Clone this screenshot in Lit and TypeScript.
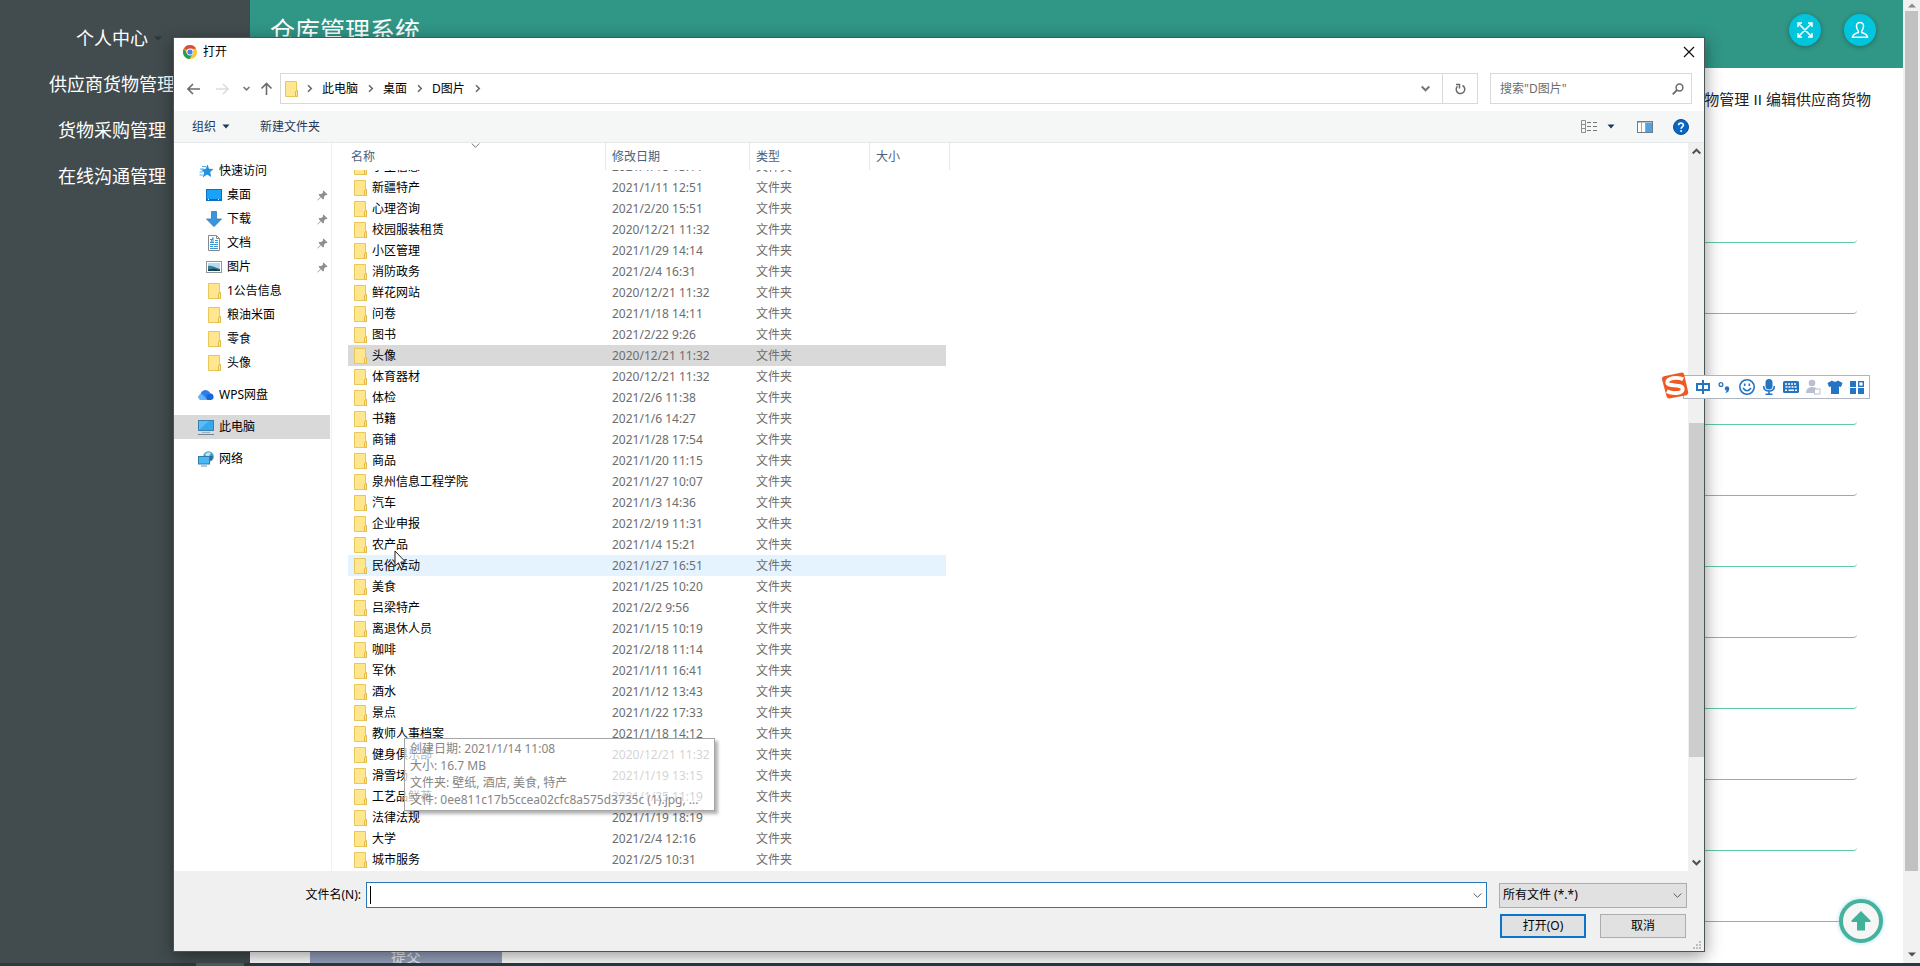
import { LitElement, html, svg, css } from "lit";
import { customElement } from "lit/decorators.js";
import { classMap } from "lit/directives/class-map.js";

type Entry = { name: string; date: string; state?: "selected" | "hovered" };

const entries: Entry[] = [
  { name: "学生信息", date: "2021/1/18 13:11" },
  { name: "新疆特产", date: "2021/1/11 12:51" },
  { name: "心理咨询", date: "2021/2/20 15:51" },
  { name: "校园服装租赁", date: "2020/12/21 11:32" },
  { name: "小区管理", date: "2021/1/29 14:14" },
  { name: "消防政务", date: "2021/2/4 16:31" },
  { name: "鲜花网站", date: "2020/12/21 11:32" },
  { name: "问卷", date: "2021/1/18 14:11" },
  { name: "图书", date: "2021/2/22 9:26" },
  { name: "头像", date: "2020/12/21 11:32", state: "selected" },
  { name: "体育器材", date: "2020/12/21 11:32" },
  { name: "体检", date: "2021/2/6 11:38" },
  { name: "书籍", date: "2021/1/6 14:27" },
  { name: "商铺", date: "2021/1/28 17:54" },
  { name: "商品", date: "2021/1/20 11:15" },
  { name: "泉州信息工程学院", date: "2021/1/27 10:07" },
  { name: "汽车", date: "2021/1/3 14:36" },
  { name: "企业申报", date: "2021/2/19 11:31" },
  { name: "农产品", date: "2021/1/4 15:21" },
  { name: "民俗活动", date: "2021/1/27 16:51", state: "hovered" },
  { name: "美食", date: "2021/1/25 10:20" },
  { name: "吕梁特产", date: "2021/2/2 9:56" },
  { name: "离退休人员", date: "2021/1/15 10:19" },
  { name: "咖啡", date: "2021/2/18 11:14" },
  { name: "军休", date: "2021/1/11 16:41" },
  { name: "酒水", date: "2021/1/12 13:43" },
  { name: "景点", date: "2021/1/22 17:33" },
  { name: "教师人事档案", date: "2021/1/18 14:12" },
  { name: "健身俱乐部", date: "2020/12/21 11:32" },
  { name: "滑雪场", date: "2021/1/19 13:15" },
  { name: "工艺品鲜花", date: "2021/1/25 11:19" },
  { name: "法律法规", date: "2021/1/19 18:19" },
  { name: "大学", date: "2021/2/4 12:16" },
  { name: "城市服务", date: "2021/2/5 10:31" },
];

const folder = html`<svg width="13" height="16" viewBox="0 0 13 16">
  <path d="M0.5 0.5H11.5V9.5H12.5V15.5H0.5Z" fill="#ffe68f" stroke="#e9c65a" />
  <path d="M10.5 15V10.5L12.5 9.5V15.5Z" fill="#ffe9a0" stroke="#e3b94a" />
</svg>`;

const pin = html`<svg width="11" height="11" viewBox="0 0 11 11">
  <path d="M6.500 0.500L10.500 4.500L9.500 5.200L8.600 5L7 6.800L7 8.800L6 9.500L4 7.300L0.800 10.500L0.300 10.200L3.400 6.700L1.500 4.800L2.300 4L4.300 4.100L6.100 2.500L5.800 1.300Z" fill="#8a9096" />
</svg>`;

const star = html`<svg width="16" height="16" viewBox="0 0 16 16">
  <path d="M9.500 1.500L11 5.800L15.500 6L12.200 9L13.200 14L9 11.500L4.800 14.500L6.200 9.400L3.200 6.500L7.600 6Z" fill="#2590dc" />
  <path d="M4 3.500H8M2 6H6M1.500 9H5M1.500 12H5" stroke="#4fb0ee" fill="none" />
</svg>`;

const desktop = html`<svg width="16" height="16" viewBox="0 0 16 16">
  <rect x="0.500" y="2.500" width="15" height="11" fill="#18a2fa" stroke="#0c72bd" />
  <path d="M1 12.500H15" stroke="#0a65aa" /><path d="M2 12.500H4M12 12.500H14" stroke="#fff" stroke-dasharray="1 1" />
</svg>`;

const download = html`<svg width="16" height="16" viewBox="0 0 16 16">
  <path d="M5.500 0.500H10.500V8H15.500L8 15.700L0.500 8H5.500Z" fill="#3a94dd" stroke="#2e7fc4" stroke-width="0.800" />
</svg>`;

const documentIcon = html`<svg width="16" height="16" viewBox="0 0 16 16">
  <path d="M2.500 0.500H10.500L13.500 3.500V15.500H2.500Z" fill="#fff" stroke="#85898c" />
  <path d="M10.500 0.500V3.500H13.500" fill="none" stroke="#85898c" />
  <path d="M4 4.500H7M4 7.500H8M9 5.500H12M9 7.500H12M4 9.500H12M4 11.500H7M8 11.500H12M4 13.500H12" stroke="#3f95cf" />
  <path d="M4.500 8L7 2.500V8" fill="none" stroke="#3f95cf" />
</svg>`;

const pictures = html`<svg width="16" height="16" viewBox="0 0 16 16">
  <rect x="0.500" y="2.500" width="15" height="11" fill="#fff" stroke="#8f9599" />
  <rect x="2" y="4" width="12" height="8" fill="#b4daf5" />
  <path d="M2 7C5 6 8 8 14 10V12H2Z" fill="#3a7d9a" /><path d="M2 10.500L8 9.500L14 11V12H2Z" fill="#1d4250" />
</svg>`;

const cloud = html`<svg width="16" height="16" viewBox="0 0 16 16">
  <path d="M3 13A3 3 0 0 1 2.500 7.200A5 5 0 0 1 11 4.500A5 5 0 0 1 12 5.500L7 13Z" fill="#2b7de9" />
  <path d="M7 13L9.500 7.500A3.500 3.500 0 0 1 15.600 9.500A3.200 3.200 0 0 1 13 13Z" fill="#1668d8" />
  <path d="M3 13A2.900 2.900 0 1 1 5.500 8.300L9.500 13Z" fill="#63b4f8" />
</svg>`;

const computer = html`<svg width="16" height="16" viewBox="0 0 16 16">
  <rect x="0.500" y="1.500" width="15" height="10" fill="#56bdf8" stroke="#3a7fae" />
  <path d="M1 11L11 2H15V11Z" fill="#38a8ee" /><path d="M4 13.500H12" stroke="#9fb0bd" /><path d="M0 15.500H16" stroke="#6f8797" />
</svg>`;

const network = html`<svg width="16" height="16" viewBox="0 0 16 16">
  <circle cx="10.500" cy="5.500" r="5.300" fill="#4f9dc4" /><path d="M7 3Q10 0 13 2L11 5L8 5Z" fill="#bfe4ef" />
  <path d="M12 5L15 5L14 9L12 9Z" fill="#2c6f95" />
  <rect x="0.500" y="5.500" width="11" height="7.500" fill="#4bb7f5" stroke="#2e7dab" /><path d="M3 15H9" stroke="#5b95b5" />
</svg>`;

const chevron = (d: string, size = 9, color = "#666", sw = 1.5) => html`<svg width=${size} height=${size} viewBox="0 0 9 9">
  <path d=${d} fill="none" stroke=${color} stroke-width=${sw} />
</svg>`;
const RIGHT = "M3 1.200L6.300 4.500L3 7.800";
const DOWN = "M0.700 2.500L4.500 6.300L8.300 2.500";
const UP = "M0.700 6.500L4.500 2.700L8.300 6.500";

const caret = html`<svg width="8" height="5" viewBox="0 0 8 5"><path d="M0.500 0.500H7.500L4 4.500Z" fill="#1e395b" /></svg>`;

@customElement("warehouse-page")
export class WarehousePage extends LitElement {
  static styles = css`
    :host {
      display: grid;
      grid-template-columns: 250px minmax(0, 1fr) 17px;
      grid-template-rows: minmax(0, 1fr) 3px;
      height: 100%;
      background: #fff;
    }
    .side {
      background: #424c4e;
      padding-top: 15px;
      display: flex;
      flex-direction: column;
    }
    .side a {
      display: flex;
      justify-content: center;
      align-items: center;
      height: 46px;
      padding-right: 26px;
      color: #fff;
      font-size: 18px;
      line-height: 24px;
      text-decoration: none;
      white-space: nowrap;
      position: relative;
    }
    .side svg {
      position: absolute;
      left: 154px;
    }
    main {
      overflow: hidden;
      display: flex;
      flex-direction: column;
    }
    header {
      flex: none;
      box-sizing: border-box;
      height: 68px;
      background: #309686;
      display: flex;
      align-items: flex-start;
      justify-content: space-between;
      padding: 14px 27px 0 20px;
    }
    h1 {
      margin: 0;
      font-size: 25px;
      font-weight: 400;
      line-height: 32px;
      color: #fff;
    }
    .actions {
      display: flex;
      gap: 23px;
    }
    .actions button {
      width: 32px;
      height: 32px;
      padding: 0;
      border: 0;
      border-radius: 50%;
      background: #00c5dc;
      box-shadow: 0 1px 5px rgba(0, 0, 0, 0.3);
      display: grid;
      place-items: center;
    }
    .crumbs {
      flex: none;
      padding: 20px 32px 0 0;
      text-align: right;
      font-family: "Liberation Sans", "Noto Sans CJK SC", sans-serif;
      font-size: 15px;
      line-height: 24px;
      color: #222;
    }
    form {
      padding: 60px 46px 0 60px;
      display: flex;
      flex-direction: column;
    }
    .field {
      flex: none;
      box-sizing: border-box;
      height: 71px;
      padding-top: 24px;
    }
    .field.spaced {
      margin-top: 40px;
    }
    .field input {
      box-sizing: border-box;
      width: 100%;
      height: 47px;
      border: 0;
      border-bottom: 1px solid #5fcba6;
      border-radius: 0 0 4px 0;
      background: none;
      outline: 0;
    }
    .submit {
      flex: none;
      align-self: flex-start;
      margin-top: 14px;
      width: 192px;
      height: 38px;
      border: 0;
      background: #96a3be;
      color: #f0f3f8;
      font: inherit;
      font-size: 15px;
    }
    .scroll {
      background: #f1f1f1;
      display: flex;
      flex-direction: column;
      align-items: center;
    }
    .scroll .thumb {
      width: 13px;
      flex: 865;
      background: #c1c1c1;
    }
    .scroll .rest {
      flex: 87;
      box-sizing: border-box;
      display: flex;
      flex-direction: column;
      justify-content: flex-end;
      padding-bottom: 6px;
    }
    .scroll .up {
      height: 11px;
      display: grid;
      place-items: center;
    }
    .task {
      grid-column: 1 / -1;
      background: linear-gradient(90deg, #2c3b43, #26384a);
      padding-left: 196px;
    }
    .task i {
      display: block;
      width: 48px;
      height: 3px;
      background: #4d5d68;
    }
  `;

  render() {
    const menu = ["个人中心", "供应商货物管理", "货物采购管理", "在线沟通管理"];
    return html`
      <nav class="side">
        ${menu.map(
          (m, i) => html`<a href="#">${m}${i === 0
            ? html`<svg width="8" height="5" viewBox="0 0 8 5"><path d="M0 0.500H8L4 4.500Z" fill="#2d3638" /></svg>`
            : ""}</a>`
        )}
      </nav>
      <main>
        <header>
          <h1>仓库管理系统</h1>
          <div class="actions">
            <button aria-label="全屏">
              <svg width="16" height="16" viewBox="0 0 16 16" fill="none" stroke="#fff" stroke-width="1.500">
                <path d="M1 5V1H5M11 1H15V5M15 11V15H11M5 15H1V11M1.500 1.500L14.500 14.500M14.500 1.500L1.500 14.500" />
              </svg>
            </button>
            <button aria-label="用户">
              <svg width="18" height="18" viewBox="0 0 18 18" fill="none" stroke="#fff" stroke-width="1.500">
                <path d="M9 1.500C6.500 1.500 5.300 3.200 5.500 5.500C5.700 8 6.500 9 7.300 10V11.500C5 12.500 1.500 13 1.500 16.300H16.500C16.500 13 13 12.500 10.700 11.500V10C11.500 9 12.300 8 12.500 5.500C12.700 3.200 11.500 1.500 9 1.500Z" />
              </svg>
            </button>
          </div>
        </header>
        <div class="crumbs">供应商货物管理 II 编辑供应商货物</div>
        <form>
          ${Array.from(
            { length: 10 },
            (_, i) => html`<div class=${classMap({ field: true, spaced: i === 2 })}>
              <input type="text" aria-label="货物信息 ${i + 1}" />
            </div>`
          )}
          <button class="submit" type="button">提交</button>
        </form>
      </main>
      <div class="scroll">
        <div class="up"><svg width="8" height="5" viewBox="0 0 8 5"><path d="M0 4.500H8L4 0.500Z" fill="#8a8a8a" /></svg></div>
        <div class="thumb"></div>
        <div class="rest"><svg width="8" height="5" viewBox="0 0 8 5"><path d="M0 0.500H8L4 4.500Z" fill="#505050" /></svg></div>
      </div>
      <div class="task"><i></i></div>
    `;
  }
}

@customElement("file-dialog")
export class FileDialog extends LitElement {
  static styles = css`
    :host {
      display: flex;
      flex-direction: column;
      box-sizing: border-box;
      border: 1px solid #4b5557;
      background: #fff;
      box-shadow: 0 4px 16px rgba(0, 0, 0, 0.42);
      font-size: 12px;
      line-height: 16px;
      color: #000;
    }
    svg {
      flex: none;
      display: block;
    }
    button,
    input,
    select {
      font: inherit;
      color: inherit;
      box-sizing: border-box;
    }
    .plain {
      border: 0;
      padding: 0;
      background: none;
      display: flex;
      align-items: center;
    }
    .title {
      height: 28px;
      flex: none;
      display: flex;
      align-items: center;
      gap: 6px;
      padding: 0 9px;
    }
    .title .plain {
      margin-left: auto;
    }
    .nav {
      height: 45px;
      flex: none;
      display: flex;
      align-items: center;
      padding: 0 12px 0 13px;
    }
    .history {
      display: flex;
      align-items: center;
      width: 93px;
      gap: 16px;
    }
    .history .recent {
      margin: 0 -6px 0 -2px;
    }
    .address {
      flex: 1;
      box-sizing: border-box;
      height: 31px;
      border: 1px solid #d9d9d9;
      display: flex;
      align-items: stretch;
    }
    .path {
      flex: 1;
      display: flex;
      align-items: center;
      padding: 0 12px 0 4px;
    }
    .path > :last-child {
      margin-left: auto;
    }
    .path .lead {
      margin: 0 8px 0 7px;
    }
    .path .step {
      margin: 0 8px;
    }
    .path a {
      color: #000;
      text-decoration: none;
    }
    .refresh {
      width: 35px;
      border: 0;
      border-left: 1px solid #d9d9d9;
      background: none;
      padding: 0;
      display: grid;
      place-items: center;
    }
    .search {
      box-sizing: border-box;
      width: 202px;
      height: 31px;
      margin-left: 12px;
      border: 1px solid #d9d9d9;
      display: flex;
      align-items: center;
      padding: 0 7px 0 9px;
    }
    .search input {
      flex: 1;
      min-width: 0;
      border: 0;
      padding: 0;
      outline: 0;
      background: none;
    }
    .search input::placeholder {
      color: #6d6d6d;
      opacity: 1;
    }
    .tools {
      flex: none;
      height: 32px;
      box-sizing: border-box;
      background: #f5f7f7;
      border-bottom: 1px solid #e5e8ea;
      display: flex;
      align-items: center;
      padding: 0 15px 0 18px;
      color: #1e395b;
    }
    .tools .organise {
      gap: 6px;
      margin-right: 30px;
    }
    .tools .views {
      margin: 0 22px 0 auto;
      gap: 9px;
    }
    .tools .preview {
      margin-right: 20px;
    }
    .body {
      flex: 1;
      min-height: 0;
      display: grid;
      grid-template-columns: 158px minmax(0, 1fr) 16px;
    }
    .places {
      border-right: 1px solid #f0f0f0;
      padding: 16px 1px 0 0;
      overflow: hidden;
    }
    .places a {
      display: flex;
      align-items: center;
      height: 24px;
      gap: 5px;
      padding-left: 24px;
      color: #000;
      text-decoration: none;
    }
    .places .sub {
      padding: 0 2px 0 32px;
    }
    .places .glyph {
      width: 16px;
      display: grid;
      place-items: center;
    }
    .places .sub .pin {
      margin-left: auto;
    }
    .places .group {
      margin-top: 8px;
    }
    .places .current {
      background: #d9d9d9;
    }
    table {
      display: flex;
      flex-direction: column;
      min-height: 0;
      overflow: hidden;
      padding-left: 16px;
      position: relative;
    }
    thead {
      display: block;
      flex: none;
      position: relative;
    }
    tbody {
      display: flex;
      flex: 1;
      min-height: 0;
      flex-direction: column;
      justify-content: flex-end;
      overflow: hidden;
      padding-bottom: 1px;
    }
    tr {
      display: grid;
      grid-template-columns: 258px 144px 120px 80px;
      width: 602px;
      flex: none;
    }
    tbody tr {
      width: 598px;
      height: 21px;
      grid-template-columns: 258px 144px 120px 76px;
    }
    th {
      box-sizing: border-box;
      height: 27px;
      padding: 6px 0 0 6px;
      border-right: 1px solid #e3e6ea;
      text-align: left;
      font-weight: 400;
      color: #4c607a;
    }
    th:first-child {
      padding-left: 3px;
    }
    .sort {
      position: absolute;
      left: 123px;
      top: -2px;
    }
    td {
      display: flex;
      align-items: center;
      padding: 0 0 0 6px;
      gap: 5px;
      color: #6d6d6d;
      white-space: nowrap;
    }
    td:first-child {
      color: #000;
    }
    .selected {
      background: #d9d9d9;
    }
    .hovered {
      background: #e5f3ff;
    }
    .scroll {
      background: #f0f0f0;
      display: flex;
      flex-direction: column;
      align-items: center;
    }
    .scroll .before {
      flex: 279;
      box-sizing: border-box;
      padding-top: 4px;
    }
    .scroll .thumb {
      flex: 338;
      width: 15px;
      background: #cdcdcd;
    }
    .scroll .after {
      flex: 111;
      display: flex;
      flex-direction: column;
      justify-content: flex-end;
      padding-bottom: 4px;
      box-sizing: border-box;
    }
    footer {
      flex: none;
      background: #f0f0f0;
      display: grid;
      grid-template-columns: 187px minmax(0, 1fr) 188px;
      row-gap: 6px;
      padding: 11px 17px 13px 0;
      position: relative;
    }
    footer label {
      text-align: right;
      line-height: 26px;
    }
    .name {
      margin: 0 12px 0 5px;
      display: flex;
      align-items: center;
      border: 1px solid #2a78b8;
      background: #fff;
      height: 24px;
      padding: 0 4px 0 3px;
    }
    .name input {
      flex: 1;
      min-width: 0;
      border: 0;
      outline: 0;
      padding: 0;
      height: 18px;
      border-left: 1px solid #000;
      background: none;
    }
    .kind {
      display: grid;
      align-items: center;
    }
    .kind select {
      grid-area: 1 / 1;
      appearance: none;
      width: 100%;
      height: 25px;
      border: 1px solid #adadad;
      border-radius: 0;
      background: #e1e1e1;
      padding: 0 3px;
    }
    .kind svg {
      grid-area: 1 / 1;
      justify-self: end;
      margin-right: 5px;
      pointer-events: none;
    }
    .buttons {
      grid-column: 3;
      display: flex;
      justify-content: space-between;
      padding: 0 1px;
    }
    .buttons button {
      width: 86px;
      height: 24px;
      padding: 0;
      border: 1px solid #adadad;
      background: #e1e1e1;
    }
    .buttons .primary {
      border: 2px solid #0b75cc;
    }
    .grip {
      position: absolute;
      right: 3px;
      bottom: 2px;
    }
  `;

  private place(icon: unknown, label: string, cls: string, pinned = false) {
    return html`<a href="#" class=${cls}><span class="glyph">${icon}</span>${label}${pinned ? html`<span class="pin">${pin}</span>` : ""}</a>`;
  }

  render() {
    const dots = [[6, 0], [3, 3], [6, 3], [0, 6], [3, 6], [6, 6]];
    return html`
      <div class="title">
        <svg width="14" height="14" viewBox="0 0 14 14">
          <circle cx="7" cy="7" r="7" fill="#fbc62f" />
          <path d="M7 7L0.900 3.500A7 7 0 0 1 13.100 3.700H7Z" fill="#dd4b3c" />
          <path d="M0.900 3.500A7 7 0 0 0 6.500 14L10 8.500L7 7L4 8.500Z" fill="#1f9d5a" />
          <circle cx="7" cy="7" r="3.400" fill="#fff" /><circle cx="7" cy="7" r="2.600" fill="#4380ec" />
        </svg>
        <span>打开</span>
        <button class="plain" aria-label="关闭">
          <svg width="12" height="12" viewBox="0 0 12 12"><path d="M1 1L11 11M11 1L1 11" stroke="#111" stroke-width="1.200" /></svg>
        </button>
      </div>
      <div class="nav">
        <div class="history">
          <button class="plain" aria-label="后退">
            <svg width="13" height="12" viewBox="0 0 13 12"><path d="M6 1L1 6L6 11M1 6H13" fill="none" stroke="#6b6b6b" stroke-width="1.600" /></svg>
          </button>
          <button class="plain" aria-label="前进">
            <svg width="13" height="12" viewBox="0 0 13 12"><path d="M7 1L12 6L7 11M12 6H0" fill="none" stroke="#dcdcdc" stroke-width="1.600" /></svg>
          </button>
          <button class="plain recent" aria-label="最近位置">${chevron(DOWN, 7, "#777", 2)}</button>
          <button class="plain" aria-label="上移">
            <svg width="13" height="13" viewBox="0 0 13 13"><path d="M1.500 6.500L6.500 1.500L11.500 6.500M6.500 1.500V13" fill="none" stroke="#6b6b6b" stroke-width="1.600" /></svg>
          </button>
        </div>
        <div class="address">
          <div class="path">
            ${folder}
            <span class="lead">${chevron(RIGHT)}</span>
            <a href="#">此电脑</a><span class="step">${chevron(RIGHT)}</span>
            <a href="#">桌面</a><span class="step">${chevron(RIGHT)}</span>
            <a href="#">D图片</a><span class="step">${chevron(RIGHT)}</span>
            <button class="plain" aria-label="以前的位置">${chevron(DOWN, 9, "#777", 2)}</button>
          </div>
          <button class="refresh" aria-label="刷新">
            <svg width="11" height="12" viewBox="0 0 11 12" fill="none" stroke="#6b6b6b" stroke-width="1.500">
              <path d="M7.500 2.500A4.300 4.300 0 1 1 2.500 3.200M1 1.500H4.500V5.500" />
            </svg>
          </button>
        </div>
        <div class="search">
          <input type="text" aria-label="搜索" placeholder='搜索"D图片"' />
          <svg width="12" height="12" viewBox="0 0 12 12" fill="none" stroke="#6b6b6b" stroke-width="1.500">
            <circle cx="7.500" cy="4.500" r="3.400" /><path d="M5 7L0.700 11.300" stroke-width="1.800" />
          </svg>
        </div>
      </div>
      <div class="tools">
        <button class="plain organise">组织 ${caret}</button>
        <button class="plain">新建文件夹</button>
        <button class="plain views" aria-label="更改视图">
          <svg width="17" height="13" viewBox="0 0 17 13" fill="none" stroke="#8a8f94">
            <path d="M0.500 0.500H4.500V12.500H0.500ZM0.500 4.500H4.500M0.500 8.500H4.500" />
            <path d="M6 2.500H10M12 2.500H16M6 6.500H10M12 6.500H16M6 10.500H10M12 10.500H16" stroke="#777" />
          </svg>
          ${caret}
        </button>
        <button class="plain preview" aria-label="预览窗格">
          <svg width="16" height="12" viewBox="0 0 16 12">
            <rect x="0.500" y="0.500" width="15" height="11" fill="#fff" stroke="#6e7c89" />
            <rect x="9" y="2" width="6" height="9" fill="#4ba3e6" /><path d="M0 1H16" stroke="#6e7c89" /><path d="M4.500 2V11M8.500 2V11" stroke="#9aa" />
          </svg>
        </button>
        <button class="plain" aria-label="帮助">
          <svg width="16" height="16" viewBox="0 0 16 16">
            <circle cx="8" cy="8" r="7.500" fill="#0967c4" stroke="#0b4e94" />
            <path d="M5.600 6.300C5.600 3.400 10.400 3.400 10.400 6.100C10.400 7.900 8.100 7.900 8.100 9.700" fill="none" stroke="#fff" stroke-width="1.600" />
            <circle cx="8.100" cy="12" r="1" fill="#fff" />
          </svg>
        </button>
      </div>
      <div class="body">
        <nav class="places">
          ${this.place(star, "快速访问", "")}
          ${this.place(desktop, "桌面", "sub", true)}
          ${this.place(download, "下载", "sub", true)}
          ${this.place(documentIcon, "文档", "sub", true)}
          ${this.place(pictures, "图片", "sub", true)}
          ${["1公告信息", "粮油米面", "零食", "头像"].map((n) => this.place(folder, n, "sub"))}
          ${this.place(cloud, "WPS网盘", "group")}
          ${this.place(computer, "此电脑", "group current")}
          ${this.place(network, "网络", "group")}
        </nav>
        <table>
          <thead>
            <tr>
              <th>名称<span class="sort">${chevron(DOWN, 9, "#777", 1)}</span></th>
              <th>修改日期</th>
              <th>类型</th>
              <th>大小</th>
            </tr>
          </thead>
          <tbody>
            ${entries.map(
              (e) => html`<tr class=${e.state ?? ""}>
                <td>${folder}${e.name}</td>
                <td>${e.date}</td>
                <td>文件夹</td>
                <td></td>
              </tr>`
            )}
          </tbody>
        </table>
        <div class="scroll">
          <div class="before">${chevron(UP, 9, "#505050", 2)}</div>
          <div class="thumb"></div>
          <div class="after">${chevron(DOWN, 9, "#505050", 2)}</div>
        </div>
      </div>
      <footer>
        <label for="file">文件名(N):</label>
        <div class="name"><input id="file" type="text" />${chevron(DOWN, 9, "#555", 1)}</div>
        <div class="kind">
          <select aria-label="文件类型"><option>所有文件 (*.*)</option></select>
          ${chevron(DOWN, 9, "#555", 1)}
        </div>
        <div class="buttons">
          <button class="primary">打开(O)</button>
          <button>取消</button>
        </div>
        <svg class="grip" width="8" height="8" viewBox="0 0 8 8">
          ${dots.map(([x, y]) => svg`<rect x=${x} y=${y} width="2" height="2" fill="#bdbdbd" />`)}
        </svg>
      </footer>
    `;
  }
}

@customElement("input-bar")
export class InputBar extends LitElement {
  static styles = css`
    :host {
      display: flex;
      align-items: flex-end;
    }
    .logo {
      position: relative;
      z-index: 1;
      margin-right: -6px;
    }
    .strip {
      display: flex;
      align-items: center;
      gap: 4px;
      height: 22px;
      border: 1px solid #aeb4c0;
      background: #fff;
      padding: 0 3px 0 10px;
    }
    svg {
      display: block;
    }
  `;

  render() {
    const b = "#2474c4";
    return html`
      <svg class="logo" width="28" height="27" viewBox="0 0 28 28">
        <path d="M2.500 4.500L21 0.500Q23 0.300 23.500 2.500L27.700 21Q27.900 23 26 24L8 27.500Q6 27.700 5.300 25.500L0.500 7.500Q0.200 5 2.500 4.500Z" fill="#ee5a24" />
        <path d="M22.500 7.500C16 4.500 6 6.500 6 11C6 15.500 22 12 22 17.500C22 22.500 12 23 5.500 20" fill="none" stroke="#fff" stroke-width="4" />
      </svg>
      <div class="strip">
        <svg width="18" height="18" viewBox="0 0 18 18" fill="none" stroke=${b} stroke-width="2"><path d="M3 6H15V12H3ZM9 2V16" /></svg>
        <svg width="18" height="18" viewBox="0 0 18 18"><circle cx="5" cy="6.500" r="1.900" fill="none" stroke=${b} stroke-width="1.300" /><circle cx="11" cy="10.500" r="2.200" fill=${b} /><path d="M13.200 10.500Q13.200 14 10 15L9.500 14Q11.500 13 11.500 11Z" fill=${b} /></svg>
        <svg width="18" height="18" viewBox="0 0 18 18" fill="none" stroke=${b} stroke-width="1.600"><circle cx="9" cy="9" r="7.200" /><path d="M5 10Q9 15.500 13 10M6.700 5.500V8M11.300 5.500V8" /></svg>
        <svg width="18" height="18" viewBox="0 0 18 18" fill="none" stroke=${b} stroke-width="1.600"><rect x="6.300" y="1.800" width="5.400" height="9" rx="2.700" fill=${b} /><path d="M3.700 8Q3.700 13 9 13Q14.300 13 14.300 8M9 13V16M5.500 16.200H12.500" /></svg>
        <svg width="18" height="18" viewBox="0 0 18 18"><rect x="1" y="3" width="16" height="12" rx="1.500" fill=${b} /><path d="M3 6H15M3.500 9H15" stroke="#fff" stroke-width="1.600" stroke-dasharray="2 1" /><path d="M3 12.200H5M6.500 12.200H12M13 12.200H15" stroke="#fff" stroke-width="1.600" /></svg>
        <svg width="18" height="18" viewBox="0 0 18 18" fill="#b8bfd0"><circle cx="8" cy="5" r="3.300" /><path d="M2 15Q2 9 8 9Q12 9 13 11H10V15Z" /><rect x="10.500" y="11" width="5.500" height="5" fill="#fff" stroke="#b8bfd0" /></svg>
        <svg width="18" height="18" viewBox="0 0 18 18"><path d="M6 2.500Q9 5 12 2.500L16.500 5L15 9L13 8.500V16H5V8.500L3 9L1.500 5Z" fill=${b} /></svg>
        <svg width="18" height="18" viewBox="0 0 18 18" fill=${b}><path d="M2 3H8V9H2ZM2 10H8V16H2ZM10 10H16V16H10Z" /><rect x="10.700" y="3.700" width="4.600" height="4.600" fill="none" stroke=${b} stroke-width="1.400" /></svg>
      </div>
    `;
  }
}

@customElement("app-root")
export class AppRoot extends LitElement {
  static styles = css`
    :host {
      display: block;
      position: relative;
      height: 100vh;
      overflow: hidden;
      font-family: "Noto Sans", "Noto Sans CJK SC", sans-serif;
    }
    .window {
      position: absolute;
      inset: 37px 215px 14px 173px;
    }
    .ime {
      position: absolute;
      top: 372px;
      right: 50px;
    }
    .top {
      position: absolute;
      right: 37px;
      bottom: 23px;
      box-sizing: border-box;
      width: 44px;
      height: 44px;
      border: 4px solid #46b29d;
      border-radius: 50%;
      background: #f6f6f6;
      box-shadow: 0 0 4px #9adcf0;
      padding: 0;
      display: grid;
      place-items: center;
    }
    .tip {
      position: absolute;
      left: 404px;
      top: 738px;
      box-sizing: border-box;
      width: 311px;
      padding: 1px 5px 2px;
      border: 1px solid #a5a5a5;
      background: rgba(255, 255, 255, 0.7);
      box-shadow: 3px 3px 3px rgba(0, 0, 0, 0.3);
      color: #858585;
      font-size: 12px;
      line-height: 17px;
      white-space: nowrap;
    }
    .pointer {
      position: absolute;
      left: 394px;
      top: 550px;
    }
  `;

  render() {
    return html`
      <warehouse-page></warehouse-page>
      <button class="top" aria-label="返回顶部">
        <svg width="20" height="20" viewBox="0 0 20 20"><path d="M10 0L19.500 9.500V11H14V19.500H6V11H0.500V9.500Z" fill="#3fb299" /></svg>
      </button>
      <file-dialog class="window"></file-dialog>
      <div class="tip" role="tooltip">
        <div>创建日期: 2021/1/14 11:08</div>
        <div>大小: 16.7 MB</div>
        <div>文件夹: 壁纸, 酒店, 美食, 特产</div>
        <div>文件: 0ee811c17b5ccea02cfc8a575d3735c (1).jpg, ...</div>
      </div>
      <input-bar class="ime"></input-bar>
      <svg class="pointer" width="13" height="20" viewBox="0 0 13 20">
        <path d="M1 1V16L4.500 12.800L7 18.500L9.200 17.500L6.800 12H11.500Z" fill="#fff" stroke="#222" />
      </svg>
    `;
  }
}
